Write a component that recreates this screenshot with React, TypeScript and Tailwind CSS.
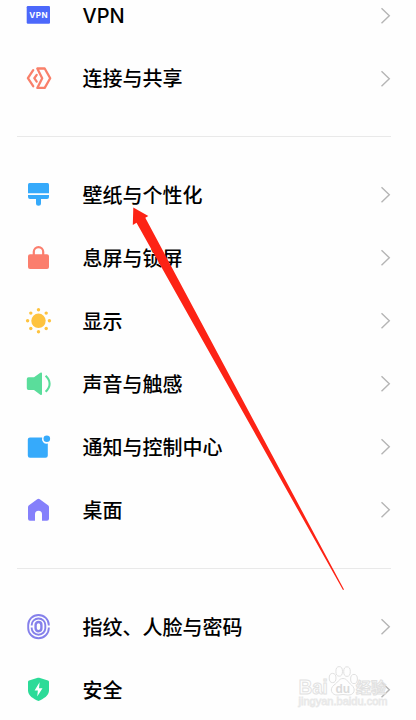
import type { ReactNode } from "react";

interface SettingItem {
  label: string;
  icon: ReactNode;
}

const groups: SettingItem[][] = [
  [
    {
      label: "VPN",
      icon: (
        <>
          <rect x="1.7" y="4" width="23.3" height="17.8" rx="1.2" fill="#4c68fb" />
          <text x="13.7" y="16" textAnchor="middle" fontSize="8" fontWeight="700" letterSpacing="0.5" fill="#fff">
            VPN
          </text>
        </>
      ),
    },
    {
      label: "连接与共享",
      icon: (
        <g fill="none" stroke="#f9806a" strokeWidth="2.3" strokeLinejoin="round" strokeLinecap="round">
          <path d="M8.2 5.2 2.9 13.2 8.2 21.2" />
          <path d="M11.7 9.9 9.3 13.2 11.7 16.6" />
          <path d="M12.3 3.5H19.7L25.2 13.2 19.7 22.9H12.3L17.2 13.2Z" />
        </g>
      ),
    },
  ],
  [
    {
      label: "壁纸与个性化",
      icon: (
        <g fill="#36aafb">
          <path d="M4.5 2H22.5Q24 2 24 3.5V12.3H3V3.5Q3 2 4.5 2Z" />
          <path d="M3 14H24V16Q24 18 22 18H16V22.2A2.5 2.5 0 0 1 11 22.2V18H5Q3 18 3 16Z" />
        </g>
      ),
    },
    {
      label: "息屏与锁屏",
      icon: (
        <>
          <path d="M8.8 12V7.8A4.7 4.7 0 0 1 18.2 7.8V12" fill="none" stroke="#fb7e6d" strokeWidth="2.2" />
          <rect x="3" y="10.3" width="21" height="14.8" rx="2" fill="#fb7e6d" />
        </>
      ),
    },
    {
      label: "显示",
      icon: (
        <g fill="#fec33f">
          <circle cx="13.5" cy="13.8" r="7.2" />
          <circle cx="13.5" cy="2.8" r="1.7" />
          <circle cx="13.5" cy="24.7" r="1.7" />
          <circle cx="2.6" cy="13.8" r="1.7" />
          <circle cx="24.4" cy="13.8" r="1.7" />
          <circle cx="5.8" cy="6.1" r="1.7" />
          <circle cx="21.2" cy="6.1" r="1.7" />
          <circle cx="5.8" cy="21.5" r="1.7" />
          <circle cx="21.2" cy="21.5" r="1.7" />
        </g>
      ),
    },
    {
      label: "声音与触感",
      icon: (
        <>
          <path d="M3.5 7.2H9L15.3 2.7Q17 1.8 17 3.5V24Q17 25.6 15.3 24.8L9 20H3.5Q1.8 20 1.8 18.3V8.9Q1.8 7.2 3.5 7.2Z" fill="#5add9b" />
          <path d="M20.6 5.8Q24.6 9.4 24.6 13.8T20.6 21.8" fill="none" stroke="#5add9b" strokeWidth="2.1" />
        </>
      ),
    },
    {
      label: "通知与控制中心",
      icon: (
        <g fill="#36aafb">
          <path d="M5 4.4H17.2A4.8 4.8 0 0 0 22.8 10.6V22.4Q22.8 24.7 20.5 24.7H5Q2.8 24.7 2.8 22.4V6.6Q2.8 4.4 5 4.4Z" />
          <circle cx="21.8" cy="5.8" r="3.3" />
        </g>
      ),
    },
    {
      label: "桌面",
      icon: (
        <path
          d="M12.2 3.3Q13.5 2.4 14.8 3.3L23 9.2Q24 9.9 24 11.3V22.7Q24 24.7 22 24.7H17V18.2A3.5 3.5 0 0 0 10 18.2V24.7H5Q3 24.7 3 22.7V11.3Q3 9.9 4 9.2Z"
          fill="#8580fb"
        />
      ),
    },
  ],
  [
    {
      label: "指纹、人脸与密码",
      icon: (
        <g fill="none" stroke="#8580eb" strokeWidth="1.9">
          <path d="M3.2 14V12A10.3 10 0 0 1 23.8 12V12.6M23.8 14.4V15.2A10.3 10 0 0 1 3.2 15.2V13.6" />
          <path d="M6.7 12.6V12A6.8 6.5 0 0 1 20.3 12V15.2A6.8 6.5 0 0 1 6.7 15.2V14.6" />
          <rect x="10.6" y="9" width="5.8" height="9.2" rx="2.9" strokeWidth="2.4" />
        </g>
      ),
    },
    {
      label: "安全",
      icon: (
        <>
          <path
            d="M12.8 1.8Q13.5 1.5 14.2 1.8L23 4.6Q24 5 24 6V14.5C24 19.5 18.5 23 13.5 25C8.5 23 3 19.5 3 14.5V6Q3 5 4 4.6Z"
            fill="#2cdb98"
          />
          <path d="M14.6 6.2 9.6 14.4H12.9L12.2 20.4 17.5 12.2H14Z" fill="#fff" />
        </>
      ),
    },
  ],
];

function SettingRow({ label, icon }: SettingItem) {
  return (
    <li className="flex h-[63px] items-center">
      <svg viewBox="0 0 27 27" className="h-[27px] w-[27px] shrink-0">
        {icon}
      </svg>
      <span className="ml-[30.5px] flex-1 pt-[3px] text-[20px] leading-[29px] font-medium text-black group-first:pt-px">
        {label}
      </span>
      <svg viewBox="0 0 11 17" className="h-[17px] w-[11px]" fill="none" stroke="#b5b5b5" strokeWidth="1.4">
        <path d="M1.5 1.2 9.3 8.7 1.5 16.2" />
      </svg>
    </li>
  );
}

function Watermark() {
  return (
    <svg viewBox="0 0 100 50" className="absolute top-[661px] left-[296px] h-[50px] w-[100px] font-['Liberation_Sans','Noto_Sans_CJK_SC',sans-serif]">
      <g fill="#fff" fillOpacity="0.4" stroke="#e1e1e1" strokeWidth="1">
        <ellipse cx="36.6" cy="17" rx="3.4" ry="4.6" />
        <ellipse cx="43.2" cy="10.4" rx="3.3" ry="4.8" />
        <ellipse cx="51" cy="10.6" rx="3.3" ry="4.8" />
        <ellipse cx="58" cy="18" rx="3.4" ry="4.6" />
        <path d="M47 17.5C51 17.5 52 21.5 55.5 24C60.5 28 58 34.5 52 34Q47 33 42 34C35.5 34.5 33 28 38 24C42 21.5 43 17.5 47 17.5Z" />
        <text x="2.8" y="33" fontSize="20" fontWeight="700" textLength="29" lengthAdjust="spacingAndGlyphs">
          Bai
        </text>
        <text x="60" y="31.5" fontSize="15" fontWeight="700" textLength="30">
          经验
        </text>
      </g>
      <text x="39.5" y="31.5" fontSize="12" fontWeight="700" fill="#dbdbdb">
        du
      </text>
      <text x="2.5" y="44" fontSize="10.5" fill="#fff" stroke="#e8e8e8" strokeWidth="0.8" textLength="89" lengthAdjust="spacingAndGlyphs">
        jingyan.baidu.com
      </text>
    </svg>
  );
}

export default function App() {
  return (
    <main className="relative h-[720px] w-[416px] overflow-hidden bg-[#fefefe] font-['Inter','Noto_Sans_CJK_SC',sans-serif]">
      <div className="-mt-4 pr-[25px] pl-[17px]">
        {groups.map((items, i) => (
          <section key={i} className="group last:pt-px">
            {i > 0 && <hr className="my-[26px] border-t border-[#e9e9e9]" />}
            <ul className="pl-2">
              {items.map((item) => (
                <SettingRow key={item.label} {...item} />
              ))}
            </ul>
          </section>
        ))}
      </div>

      <Watermark />

      <svg viewBox="0 0 416 720" className="pointer-events-none absolute inset-0 h-[720px] w-[416px]">
        <path d="M133.3 207.5 148.3 216 145.3 217.8 344 589.5 343 590 136.5 222.8 132.8 225Z" fill="#fd2315" />
      </svg>
    </main>
  );
}
